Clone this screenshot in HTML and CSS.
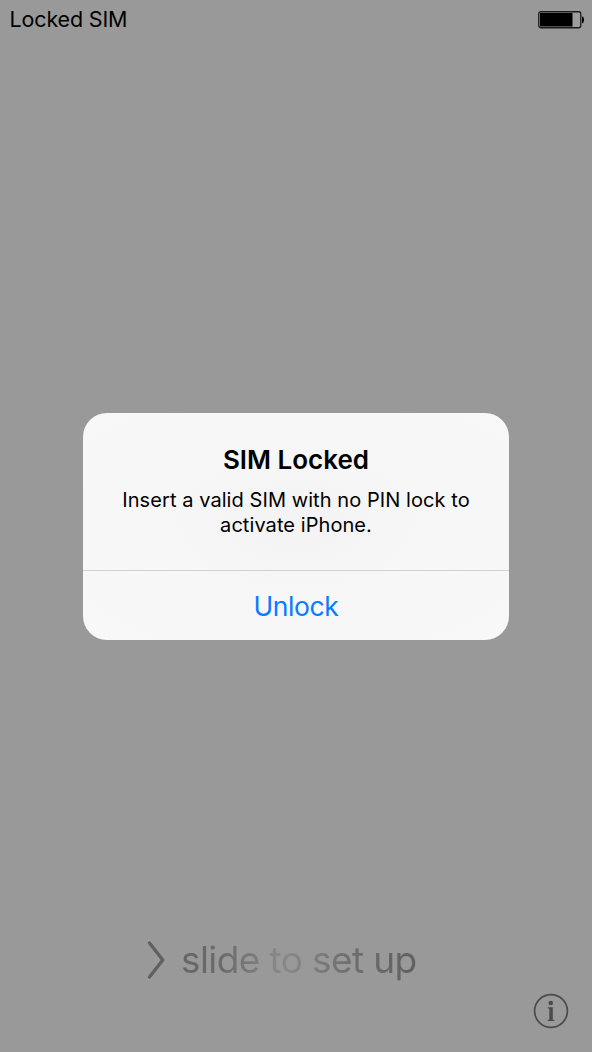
FILE: index.html
```
<!DOCTYPE html>
<html lang="en">
<head>
  <meta charset="UTF-8">
  <meta name="viewport" content="width=device-width, initial-scale=1.0">
  <title>SIM Locked</title>
  <link rel="stylesheet" href="styles.css">
</head>
<body>
  <header class="status-bar">
    <span class="carrier">Locked SIM</span>
    <svg class="battery" width="46" height="18" viewBox="0 0 46 18">
      <rect x="0.75" y="0.75" width="42" height="16" rx="2" fill="#9d9d9d" stroke="#1c1c1c" stroke-width="1.3"/>
      <rect x="2" y="2" width="32.5" height="13.5" fill="#000"/>
      <path d="M44 5.2c1.4.3 2 1.500 2 3.600s-.6 3.300-2 3.600z" fill="#000"/>
    </svg>
  </header>

  <footer class="bottom">
    <div class="slide">
      <svg width="18" height="38" viewBox="0 0 18 38">
        <path d="M2.500 2L15.800 19L2.500 36" fill="none" stroke="#606060" stroke-width="3.300" stroke-linecap="round" stroke-linejoin="round"/>
      </svg>
      <span class="slide-text">slide to set up</span>
    </div>
    <button class="info" aria-label="Info">
      <svg width="36" height="36" viewBox="0 0 36 36">
        <circle cx="18" cy="18" r="16.400" fill="none" stroke="#4b4b4b" stroke-width="1.700"/>
        <circle cx="17.800" cy="10" r="2.300" fill="#4b4b4b"/>
        <path d="M14.800 14.200H19.800V26.700H21.300V28H14.800V26.700H16.300V15.500H14.800z" fill="#4b4b4b"/>
      </svg>
    </button>
  </footer>

  <div class="alert" role="alertdialog">
    <div class="alert-body">
      <h1>SIM Locked</h1>
      <p>Insert a valid SIM with no PIN lock to activate iPhone.</p>
    </div>
    <button class="unlock">Unlock</button>
  </div>
</body>
</html>
```

FILE: styles.css
```
* {
  box-sizing: border-box;
}
body {
  margin: 0;
  height: 1052px;
  display: flex;
  flex-direction: column;
  justify-content: space-between;
  position: relative;
  overflow: hidden;
  background-color: #999;
  color: #000;
  font-family: Inter, "Liberation Sans", sans-serif;
}
button {
  border: none;
  padding: 0;
  background: none;
  font-family: inherit;
}
svg {
  display: block;
}
.status-bar {
  height: 39px;
  padding: 0 8px 0 9.5px;
  display: flex;
  align-items: center;
  justify-content: space-between;
}
.carrier {
  margin-bottom: 2px;
  font-size: 21.5px;
  letter-spacing: -0.15px;
}
.slide {
  display: flex;
  align-items: center;
  gap: 16px;
  margin-left: 147px;
  height: 50px;
}
.slide-text {
  font-size: 37px;
  line-height: 50px;
  letter-spacing: -0.6px;
  white-space: nowrap;
  color: transparent;
  background: linear-gradient(90deg, #656565 0%, #6b6b6b 18%, #868686 40%, #888 46%, #6f6f6f 70%, #606060 100%);
  -webkit-background-clip: text;
  background-clip: text;
}
.info {
  display: block;
  margin: 8px 23px 23px auto;
}
.alert {
  position: absolute;
  top: 412.5px;
  left: 83px;
  width: 426px;
  height: 227px;
  border-radius: 24px;
  overflow: hidden;
  background: radial-gradient(ellipse at 50% 48%, #f3f3f3 0%, #f7f7f7 45%, #f8f8f8 100%);
}
.alert-body {
  height: 158px;
  padding: 30px 30px 0;
  border-bottom: 1px solid #d0d2d2;
  text-align: center;
}
.alert h1 {
  margin: 0;
  font-size: 26px;
  line-height: 34px;
  font-weight: 600;
}
.alert p {
  margin: 11px 0 0;
  font-size: 20px;
  line-height: 25px;
  letter-spacing: 0.07px;
}
.unlock {
  width: 100%;
  height: 69px;
  padding-top: 1px;
  font-size: 26.5px;
  letter-spacing: -0.4px;
  color: #0a7aff;
}
```
